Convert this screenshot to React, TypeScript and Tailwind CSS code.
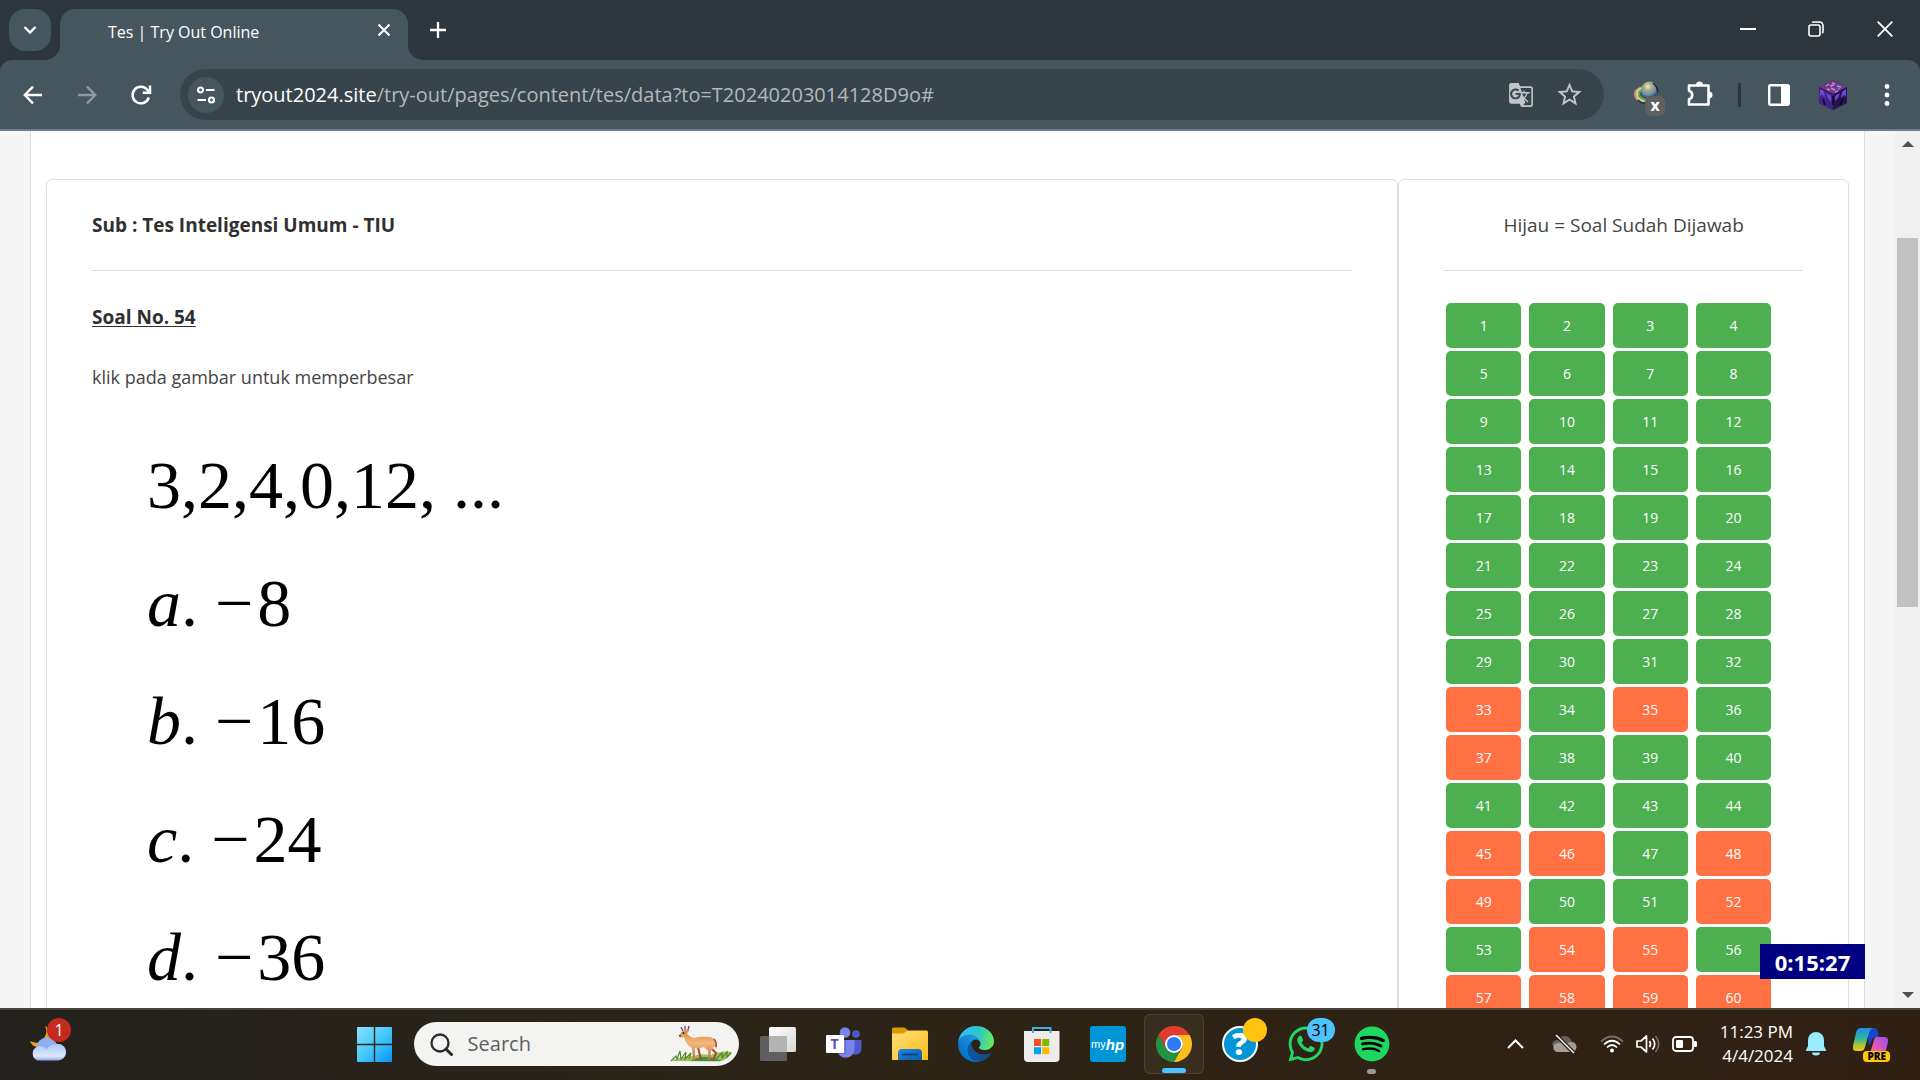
import type { ReactNode } from "react";
import { FaSpotify, FaWhatsapp } from "react-icons/fa";
import { MdGTranslate, MdOutlineStarOutline } from "react-icons/md";

const UNANSWERED = new Set([33, 35, 37, 45, 46, 48, 49, 52, 54, 55, 57, 58, 59, 60]);
const QUESTIONS = Array.from({ length: 60 }, (_, i) => i + 1);
const CHOICES = [
  { letter: "a", value: "8" },
  { letter: "b", value: "16" },
  { letter: "c", value: "24" },
  { letter: "d", value: "36" },
];

/* ---------- Browser chrome ---------- */

function TabStrip() {
  return (
    <header className="flex h-[60px] shrink-0 items-start bg-[#2c363c] pl-[9px] text-white">
      <button aria-label="Search tabs" className="mt-[9px] grid h-[42px] w-[42px] place-items-center rounded-2xl bg-[#45565f]">
        <svg width="14" height="10" viewBox="0 0 14 10" fill="none" stroke="currentColor" strokeWidth="2.4">
          <path d="M1.5 2l5.5 5.5L12.500 2" />
        </svg>
      </button>
      <div className="relative mt-[9px] ml-[9px] flex h-[51px] w-[348px] items-center rounded-t-[15px] bg-[#45565f] pr-[15px] pb-[6px] pl-12">
        <svg className="absolute bottom-0 -left-[15px]" width="15" height="15" viewBox="0 0 15 15">
          <path d="M15 0v15H0A15 15 0 0 0 15 0z" fill="#45565f" />
        </svg>
        <svg className="absolute -right-[15px] bottom-0" width="15" height="15" viewBox="0 0 15 15">
          <path d="M0 0v15h15A15 15 0 0 1 0 0z" fill="#45565f" />
        </svg>
        <span className="flex-1 text-base">Tes | Try Out Online</span>
        <button aria-label="Close tab" className="mb-1">
          <svg width="18" height="18" viewBox="0 0 18 18" fill="none" stroke="currentColor" strokeWidth="2">
            <path d="M3.500 3.500l11 11M14.500 3.500l-11 11" />
          </svg>
        </button>
      </div>
      <button aria-label="New tab" className="mt-[9px] ml-[9px] grid h-[42px] w-[42px] place-items-center">
        <svg width="18" height="18" viewBox="0 0 18 18" stroke="currentColor" strokeWidth="2.300">
          <path d="M9 1v16M1 9h16" />
        </svg>
      </button>
      <div className="ml-auto flex h-[58px] pr-px">
        <button aria-label="Minimize" className="grid w-[69px] place-items-center">
          <svg width="16" height="16" viewBox="0 0 16 16" stroke="currentColor" strokeWidth="2">
            <path d="M0 8h16" />
          </svg>
        </button>
        <button aria-label="Restore" className="grid w-[68px] place-items-center">
          <svg width="16" height="16" viewBox="0 0 16 16" fill="none" stroke="currentColor" strokeWidth="1.600">
            <rect x="1" y="4" width="11" height="11" rx="2" />
            <path d="M4 1.500C4.500 1 5 1 6 1h5.500A3.500 3.500 0 0 1 15 4.500V10c0 1 0 1.500-.8 2.300" />
          </svg>
        </button>
        <button aria-label="Close" className="grid w-[69px] place-items-center">
          <svg width="16" height="16" viewBox="0 0 16 16" stroke="currentColor" strokeWidth="1.800">
            <path d="M.7.7l14.600 14.600M15.300.7L.7 15.300" />
          </svg>
        </button>
      </div>
    </header>
  );
}

function ToolButton({ label, children }: { label: string; children: ReactNode }) {
  return (
    <button aria-label={label} className="grid h-[54px] w-[54px] shrink-0 place-items-center">
      {children}
    </button>
  );
}

function RainbowPlanet() {
  return (
    <svg width="26" height="30" viewBox="0 0 26 30">
      <defs>
        <radialGradient id="planet" cx=".4" cy=".3" r=".75">
          <stop offset="0" stopColor="#eceee0" />
          <stop offset=".3" stopColor="#a9b07c" />
          <stop offset=".65" stopColor="#6c8bb0" />
          <stop offset="1" stopColor="#1f2c3c" />
        </radialGradient>
      </defs>
      <path d="M10 7Q1 9 2 15t9 8" fill="none" stroke="#c98a8c" strokeWidth="2" />
      <path d="M10 8Q3 10 4 15t8 6" fill="none" stroke="#e6dc63" strokeWidth="2" />
      <path d="M11 9q-6 2-5 6t8 5" fill="none" stroke="#52ad61" strokeWidth="2" />
      <path d="M5 20q3 4 8 3" fill="none" stroke="#3b2b6b" strokeWidth="2" />
      <circle cx="16.500" cy="10" r="8.500" fill="url(#planet)" />
      <path d="M20 3q5 4 4.500 9" fill="none" stroke="#1d2228" strokeWidth="1.500" />
    </svg>
  );
}

function CubeAvatar() {
  return (
    <svg width="30" height="32" viewBox="0 0 30 32">
      <path d="M15 1l14 7v16l-14 7-14-7V8z" fill="#2a1258" />
      <path d="M15 1l14 7-14 7L1 8z" fill="#6d3a86" />
      <path d="M1 9l14 7v15L1 24z" fill="#3f2388" />
      <path d="M29 9l-14 7v15l14-7z" fill="#2b1252" />
      <path d="M2 10l4 2 1 7-3-4-2 3zM8 14l5 3 0 6-3-4zM28 10l-4 3-1 6 3-3 2 2zM22 14l-5 3 0 5 3-3z" fill="#6f48d0" />
      <path d="M8 7l3-2M14 4l3 1M13 9l4 2M19 7l4 1M9 10l3 1M17 13l3-1M12 7l4-1" stroke="#c98ad0" strokeWidth="1.500" />
      <path d="M15 17v9M5 20l2 6M25 19l-3 7" fill="none" stroke="#0f0620" strokeWidth="1.500" />
      <circle cx="21" cy="9.500" r="1.200" fill="#3e7bff" />
    </svg>
  );
}

function Toolbar() {
  return (
    <div className="shrink-0 bg-[#2c363c]">
      <div className="flex h-[71px] items-center rounded-t-xl border-b-2 border-[#6b7f87] bg-[#45565f] px-[6px] text-white">
        <ToolButton label="Back">
          <svg width="20" height="20" viewBox="0 0 20 20" fill="none" stroke="currentColor" strokeWidth="2.400">
            <path d="M19 10H2.500M10 1.700L1.800 10l8.200 8.300" />
          </svg>
        </ToolButton>
        <ToolButton label="Forward">
          <svg width="20" height="20" viewBox="0 0 20 20" fill="none" stroke="#8e9aa0" strokeWidth="2.400">
            <path d="M1 10h16.500M10 1.700l8.200 8.300-8.200 8.300" />
          </svg>
        </ToolButton>
        <ToolButton label="Reload">
          <svg width="22" height="22" viewBox="0 0 22 22" fill="none" stroke="currentColor" strokeWidth="2.500">
            <path d="M18.800 13.500A8.300 8.300 0 1 1 17.500 6L20 8.500" />
            <path d="M20 1.500v7.300h-7.200" />
          </svg>
        </ToolButton>
        <div className="ml-3 flex h-[51px] min-w-0 flex-1 items-center rounded-full bg-[#38444b] pr-[11px] pl-2">
          <button aria-label="View site information" className="grid h-9 w-9 shrink-0 place-items-center rounded-full bg-[#45565f]">
            <svg width="20" height="18" viewBox="0 0 20 18" fill="none" stroke="currentColor" strokeWidth="2.200">
              <circle cx="4.500" cy="4" r="2.500" />
              <path d="M10 4h8.500M1.500 14H10" />
              <circle cx="15.500" cy="14" r="2.500" />
            </svg>
          </button>
          <label htmlFor="address" className="ml-3 text-xl">
            tryout2024.site
          </label>
          <input
            id="address"
            type="text"
            defaultValue="/try-out/pages/content/tes/data?to=T20240203014128D9o#"
            className="min-w-0 flex-1 bg-transparent text-xl text-[#b3b9bc] outline-none"
          />
          <button aria-label="Translate this page" className="grid h-12 w-12 place-items-center text-[#c3c6c8]">
            <MdGTranslate size={26} />
          </button>
          <button aria-label="Bookmark this tab" className="grid h-12 w-12 place-items-center text-[#c3c6c8]">
            <MdOutlineStarOutline size={29} />
          </button>
        </div>
        <div className="ml-[15px] flex items-center">
          <button aria-label="Extension" className="relative grid h-[54px] w-[54px] place-items-center">
            <RainbowPlanet />
            <span className="absolute right-2 bottom-[6px] grid h-5 w-5 place-items-center rounded-md bg-[#5f5f5f] pb-px text-base leading-none font-bold">
              x
            </span>
          </button>
          <ToolButton label="Extensions">
            <svg width="28" height="28" viewBox="0 0 28 28">
              <path
                d="M3 4.500h19.500v19H3v-5.200q3.200-.8 3.200-4.300T3 9.700z"
                fill="none"
                stroke="currentColor"
                strokeWidth="2.600"
                strokeLinejoin="round"
              />
              <path d="M10 4a3.500 3.500 0 0 1 7 0zM23 10.500a3.500 3.500 0 0 1 0 7z" fill="currentColor" />
            </svg>
          </ToolButton>
          <span className="mx-[11px] h-6 w-[3px] bg-[#2c363c]" />
          <ToolButton label="Side panel">
            <svg width="22" height="22" viewBox="0 0 22 22">
              <rect x="1.200" y="1.200" width="19.600" height="19.600" rx="1.500" fill="none" stroke="currentColor" strokeWidth="2.400" />
              <path d="M13 1h8v20h-8z" fill="currentColor" />
            </svg>
          </ToolButton>
          <ToolButton label="Profile">
            <CubeAvatar />
          </ToolButton>
          <ToolButton label="Menu">
            <svg width="6" height="22" viewBox="0 0 6 22" fill="currentColor">
              <circle cx="3" cy="2.500" r="2.400" />
              <circle cx="3" cy="11" r="2.400" />
              <circle cx="3" cy="19.500" r="2.400" />
            </svg>
          </ToolButton>
        </div>
      </div>
    </div>
  );
}

/* ---------- Web page ---------- */

function QuestionCard() {
  return (
    <section className="w-3/4 rounded-md border border-[#dedede] px-[45px] pt-[30px] text-[#303030]">
      <h2 className="text-[19px] leading-[30px] font-bold">Sub : Tes Inteligensi Umum - TIU</h2>
      <hr className="mt-[30px] border-[#dedede]" />
      <h3 className="mt-[31px] text-[19px] leading-[30px] font-bold underline underline-offset-2">Soal No. 54</h3>
      <p className="mt-[30px] text-lg leading-[30px] text-[#444]">klik pada gambar untuk memperbesar</p>
      <div className="mt-[34px] pl-[55px] font-['Liberation_Serif',serif] text-[68px] leading-[118px] text-black">
        <p>3,2,4,0,12, ...</p>
        {CHOICES.map(({ letter, value }) => (
          <p key={letter}>
            <i>{letter}</i>. <span className="pr-1">−</span>
            {value}
          </p>
        ))}
      </div>
    </section>
  );
}

function NavigatorCard() {
  return (
    <aside className="w-1/4 rounded-md border border-[#dedede] px-[45px] pt-[30px] text-[#444]">
      <p className="text-center text-[19px] leading-[30px]">Hijau = Soal Sudah Dijawab</p>
      <hr className="mt-[30px] border-[#dedede]" />
      <div className="mt-8 mr-8 ml-[2px] grid grid-cols-4 gap-x-2 gap-y-[3px]">
        {QUESTIONS.map((n) => (
          <button
            key={n}
            className={`h-[45px] rounded-[5px] text-sm text-white ${UNANSWERED.has(n) ? "bg-[#ff7043]" : "bg-[#4caf50]"}`}
          >
            {n}
          </button>
        ))}
      </div>
    </aside>
  );
}

function ScrollBar() {
  return (
    <div className="flex w-[25px] shrink-0 flex-col items-center bg-[#f0f0f0] pt-[10px] pb-[10px]">
      <svg width="12" height="6" viewBox="0 0 12 6">
        <path d="M6 0l6 6H0z" fill="#505050" />
      </svg>
      <div className="mt-[91px] h-[43%] w-[21px] bg-[#c1c1c1]" />
      <svg className="mt-auto" width="12" height="6" viewBox="0 0 12 6">
        <path d="M0 0h12L6 6z" fill="#505050" />
      </svg>
    </div>
  );
}

function WebPage() {
  return (
    <main className="flex min-h-0 flex-1 bg-[#f5f5f5]">
      <div className="relative flex min-w-0 flex-1 overflow-hidden px-[30px]">
        <div className="flex-1 border-x border-[#dcdcdc] bg-white px-[15px] pt-12">
          <div className="flex">
            <QuestionCard />
            <NavigatorCard />
          </div>
        </div>
        <div className="absolute right-[30px] bottom-[29px] grid h-[35px] w-[105px] place-items-center bg-[#000080] text-[22px] leading-none font-bold text-white">
          0:15:27
        </div>
      </div>
      <ScrollBar />
    </main>
  );
}

/* ---------- Taskbar ---------- */

function WeatherIcon() {
  return (
    <svg width="36" height="36" viewBox="0 0 36 36">
      <defs>
        <linearGradient id="cloud" x1="0" y1="0" x2="0" y2="1">
          <stop offset="0" stopColor="#a9c6f7" />
          <stop offset=".75" stopColor="#dce9fb" />
          <stop offset="1" stopColor="#8ba9e4" />
        </linearGradient>
      </defs>
      <path d="M15 0c2 4 2 8-1 12-3 5-8 6-14 3 1 3 4 6 8 6l14-9c0-6-3-10-7-12z" fill="#f0a01e" />
      <circle cx="17" cy="22" r="10.500" fill="#8fb0ee" />
      <circle cx="28" cy="26" r="8" fill="#a9c1f0" />
      <path d="M7.500 34.500a7.500 7.500 0 0 1 0-14q5-1.500 9 3 5-7 12-5.500a8.300 8.300 0 0 1 0 16.500z" fill="url(#cloud)" />
    </svg>
  );
}

function StartIcon() {
  return (
    <svg width="35" height="35" viewBox="0 0 35 35">
      <defs>
        <linearGradient id="win" x1="0" y1="0" x2="1" y2="1">
          <stop offset="0" stopColor="#8be2fb" />
          <stop offset=".5" stopColor="#45c8fb" />
          <stop offset="1" stopColor="#0a94f8" />
        </linearGradient>
      </defs>
      <path d="M1 0h15.800v16.800H0V1a1 1 0 0 1 1-1zM18.200 0H34a1 1 0 0 1 1 1v15.800H18.200zM0 18.200h16.800V35H1a1 1 0 0 1-1-1zM18.200 18.200H35V34a1 1 0 0 1-1 1H18.200z" fill="url(#win)" />
    </svg>
  );
}

function DeerIcon() {
  return (
    <svg className="h-[38px] w-[64px] shrink-0" viewBox="0 0 64 38">
      <defs>
        <linearGradient id="coat" x1="0" y1="0" x2="0" y2="1">
          <stop offset="0" stopColor="#d9843f" />
          <stop offset=".45" stopColor="#f2b97c" />
          <stop offset="1" stopColor="#c8653a" />
        </linearGradient>
      </defs>
      <path d="M1 36q10-5 22-5 8-3 18-1 10-5 21-3-3 7-12 9.500z" fill="#a3bd5c" />
      <path d="M20 36q10-6 24-3l8 3z" fill="#3f9146" />
      <path d="M1 36l5-5 1 3 3-8 1 8 5-7-1 7 6-6-2 6M46 34l6-6 0 5 5-6 0 5 4-4" fill="none" stroke="#4f8b2a" strokeWidth="1.200" />
      <path d="M40 22l6 6-3 8M28 22l3 13" stroke="#a8482f" strokeWidth="2" fill="none" strokeLinejoin="round" />
      <path
        d="M9 11q1-3 4-5l6-2q0 3-2 4 2 4 7 5 7-2 16-1 6 1 6 7l1 5-3-3q-1 4-3 5l-1 9h-2l0-9-4-4q-5 2-9 1l0 13h-2l-1-13q-6-3-8-11-3 1-5 0z"
        fill="url(#coat)"
      />
      <path d="M13 6l-2-4M15 5l0-4M18 5l1-4" fill="none" stroke="#6c4661" strokeWidth="1.300" />
      <path d="M44 14q3 3 2 8" fill="none" stroke="#a8482f" strokeWidth="1.500" />
      <circle cx="13.500" cy="8" r=".9" fill="#222" />
      <path d="M9 10.500l2 .5" stroke="#222" strokeWidth="1.200" />
    </svg>
  );
}

function TaskViewIcon() {
  return (
    <svg width="36" height="34" viewBox="0 0 36 34">
      <defs>
        <linearGradient id="tv" x1="0" y1="0" x2="1" y2="1">
          <stop offset="0" stopColor="#fff" />
          <stop offset="1" stopColor="#d8d8d8" />
        </linearGradient>
      </defs>
      <rect x="9" y="0" width="27" height="25" rx="1.500" fill="url(#tv)" />
      <rect x="0" y="9" width="27" height="25" rx="1.500" fill="#5f5f5f" />
      <path d="M9 9h18v16H9z" fill="#b3b3b3" />
    </svg>
  );
}

function TeamsIcon() {
  return (
    <span className="relative">
      <svg width="36" height="34" viewBox="0 0 36 34">
        <circle cx="30" cy="7" r="3.800" fill="#5059c9" />
        <path d="M24 13h10.500a1 1 0 0 1 1 1v8a6 6 0 0 1-9 5z" fill="#5059c9" />
        <circle cx="19" cy="5.500" r="5.300" fill="#7b83eb" />
        <path d="M12 13h16.500v10a8.800 8.800 0 0 1-17.500 0z" fill="#7b83eb" />
        <path d="M12 26h7V14h1v13h-7.500z" fill="#4b53bc" opacity=".5" />
        <rect y="8" width="18" height="18" rx="1" fill="#fff" />
      </svg>
      <span className="absolute top-2 left-0 grid h-[18px] w-[18px] place-items-center text-sm leading-none font-bold text-[#4b53bc]">T</span>
    </span>
  );
}

function FolderIcon() {
  return (
    <svg width="36" height="34" viewBox="0 0 36 34">
      <defs>
        <linearGradient id="fold" x1="0" y1="0" x2="1" y2="1">
          <stop offset="0" stopColor="#ffe07a" />
          <stop offset="1" stopColor="#fdbc1a" />
        </linearGradient>
        <linearGradient id="foldBlue" x1="0" y1="0" x2="1" y2="1">
          <stop offset="0" stopColor="#1c86dc" />
          <stop offset="1" stopColor="#0a5fab" />
        </linearGradient>
      </defs>
      <path d="M0 2q0-1.500 1.500-1.500H12q1.500 0 3 2l2 2-4 5H0z" fill="#dd9a00" />
      <path d="M0 6.500h10q2 0 3.500-1.500t3-1.500H34.500Q36 3.500 36 5v28H0z" fill="url(#fold)" />
      <path d="M6 33v-7q0-4 4-4h16q4 0 4 4v7z" fill="url(#foldBlue)" />
      <path d="M10.500 27.500h15" stroke="#0a4584" strokeWidth="2" strokeLinecap="round" />
    </svg>
  );
}

function EdgeIcon() {
  return (
    <svg width="36" height="36" viewBox="0 0 256 256">
      <defs>
        <linearGradient id="edgeDark" x1="0" y1="0" x2="1" y2="0">
          <stop offset="0" stopColor="#0c59a4" />
          <stop offset="1" stopColor="#114a8b" />
        </linearGradient>
        <linearGradient id="edgeBlue" x1=".9" y1=".2" x2=".3" y2="1">
          <stop offset="0" stopColor="#1b9de2" />
          <stop offset=".5" stopColor="#127fd4" />
          <stop offset="1" stopColor="#0071ca" />
        </linearGradient>
        <linearGradient id="edgeGreen" x1="0" y1=".4" x2="1" y2=".6">
          <stop offset="0" stopColor="#35c1f1" />
          <stop offset=".5" stopColor="#2cc4cf" />
          <stop offset="1" stopColor="#66eb5a" />
        </linearGradient>
      </defs>
      <path fill="url(#edgeDark)" d="M231 190.500c-3.400 1.800-6.900 3.400-10.500 4.700a101.900 101.900 0 0 1-35.900 6.500c-47.300 0-88.500-32.500-88.500-74.300 0-11.300 6.300-22 16.400-27.500-42.800 1.800-53.800 46.400-53.800 72.500 0 73.900 68.100 81.400 82.800 81.400 7.900 0 19.800-2.300 27-4.600l1.300-.4a128.300 128.300 0 0 0 66.600-52.800 4 4 0 0 0-5.400-5.500z" />
      <path fill="url(#edgeBlue)" d="M105.700 241.400a79.200 79.200 0 0 1-22.700-21.300 80.700 80.700 0 0 1 29.500-120c3.200-1.500 8.500-4.100 15.600-4a32.400 32.400 0 0 1 25.700 13 32 32 0 0 1 6.300 18.700c0-.2 24.500-79.600-80-79.600-43.900 0-80 41.600-80 78.200a130.200 130.200 0 0 0 12.100 56 128 128 0 0 0 156.400 67 75.500 75.500 0 0 1-62.800-8z" />
      <path fill="url(#edgeGreen)" d="M152.300 148.900c-.9 1-3.400 2.500-3.400 5.600 0 2.600 1.700 5.100 4.700 7.200 14.400 10 41.500 8.700 41.600 8.700a59.600 59.600 0 0 0 30.300-8.400A61.400 61.400 0 0 0 256 109.300c.3-22.400-8-37.300-11.300-43.900C223.500 23.900 177.700 0 128 0A128 128 0 0 0 0 126.200c.5-36.500 36.800-66 80-66 3.500 0 23.500.3 42 10.100a72.600 72.600 0 0 1 30.900 29.300c6.100 10.600 7.200 24.100 7.200 29.500s-2.700 13.300-7.800 19.900z" />
    </svg>
  );
}

function StoreIcon() {
  return (
    <svg width="36" height="36" viewBox="0 0 36 36">
      <path d="M0 5h35.500v27a4 4 0 0 1-4 4H4a4 4 0 0 1-4-4z" fill="#ececec" />
      <path d="M9 7V2h17.500v5" fill="none" stroke="#2fb2ee" strokeWidth="2" />
      <path d="M10 13h7v7h-7z" fill="#f25022" />
      <path d="M18.200 13h7v7h-7z" fill="#7fba00" />
      <path d="M10 21.200h7v7h-7z" fill="#00a4ef" />
      <path d="M18.200 21.200h7v7h-7z" fill="#ffb900" />
    </svg>
  );
}

function ChromeIcon() {
  return (
    <svg width="36" height="36" viewBox="0 0 48 48">
      <path d="M24 12h20.780A24 24 0 0 0 3.210 12l10.400 18A12 12 0 0 1 24 12z" fill="#e33b2e" />
      <path d="M13.610 30L3.220 12A24 24 0 0 0 24 48l10.400-18a12 12 0 0 1-20.790 0z" fill="#229342" />
      <path d="M34.390 30L24 48a24 24 0 0 0 20.780-36H24a12 12 0 0 1 10.390 18z" fill="#fbc116" />
      <circle cx="24" cy="24" r="12" fill="#fff" />
      <circle cx="24" cy="24" r="9.500" fill="#2f7bf2" />
    </svg>
  );
}

function CopilotIcon() {
  return (
    <svg width="36" height="32" viewBox="0 0 36 32">
      <defs>
        <linearGradient id="copA" x1="0" y1="0" x2="0" y2="1">
          <stop offset="0" stopColor="#1b8ff0" />
          <stop offset=".45" stopColor="#2fb59a" />
          <stop offset=".75" stopColor="#a8c93a" />
          <stop offset="1" stopColor="#f6c21c" />
        </linearGradient>
        <linearGradient id="copB" x1="1" y1="0" x2="0" y2="1">
          <stop offset="0" stopColor="#9a4df0" />
          <stop offset=".5" stopColor="#e05ab0" />
          <stop offset="1" stopColor="#fb8a55" />
        </linearGradient>
      </defs>
      <path d="M14 0h7q3 0 4 4l1 5h-3q-3 0-4 3l-3 6z" fill="#1846c8" />
      <path d="M8 0h12q-3 1-4 5l-4 14q-1 4-4 4H3q-4 0-3-5L3 5q1-5 5-5z" fill="url(#copA)" />
      <path d="M23 9h8q5 0 4 5l-3 12q-1 5-5 5H13l2-4q2-1 3-5l3-10q1-3 2-3z" fill="url(#copB)" />
    </svg>
  );
}

function TaskButton({ label, children, active = false }: { label: string; children: ReactNode; active?: boolean }) {
  return (
    <button
      aria-label={label}
      className={`relative grid h-[60px] w-[60px] shrink-0 place-items-center rounded-md ${active ? "border border-white/10 bg-white/5" : ""}`}
    >
      {children}
    </button>
  );
}

function Taskbar() {
  return (
    <footer className="relative flex h-[72px] shrink-0 items-center border-t-2 border-[#48443a] bg-linear-to-r from-[#24221e] via-[#2d2415] to-[#312114] pb-[2px] text-white">
      <div className="w-[18%] shrink-0 pl-[18px]">
        <TaskButton label="Weather">
          <WeatherIcon />
          <span className="absolute top-[4px] left-[29px] grid h-6 w-6 place-items-center rounded-full bg-[#c42b1c] text-base leading-none">1</span>
        </TaskButton>
      </div>
      <div className="-ml-px flex items-center gap-[6px]">
        <TaskButton label="Start">
          <StartIcon />
        </TaskButton>
        <div className="mx-[3px] flex h-11 w-[325px] items-center overflow-hidden rounded-full bg-[#f3f3f1] pr-[5px] pl-4">
          <svg className="shrink-0" width="23" height="23" viewBox="0 0 23 23" fill="none" stroke="#2b2b2b" strokeWidth="2.300">
            <circle cx="10" cy="10" r="8.500" />
            <path d="M16 16l5.500 5.500" strokeWidth="3" strokeLinecap="round" />
          </svg>
          <input
            type="search"
            aria-label="Search"
            placeholder="Search"
            className="ml-[15px] min-w-0 flex-1 bg-transparent text-xl text-[#333] outline-none placeholder:text-[#5e5e5e]"
          />
          <DeerIcon />
        </div>
        <TaskButton label="Task view">
          <TaskViewIcon />
        </TaskButton>
        <TaskButton label="Microsoft Teams">
          <TeamsIcon />
        </TaskButton>
        <TaskButton label="File Explorer">
          <FolderIcon />
        </TaskButton>
        <TaskButton label="Microsoft Edge">
          <EdgeIcon />
        </TaskButton>
        <TaskButton label="Microsoft Store">
          <StoreIcon />
        </TaskButton>
        <TaskButton label="myHP">
          <span className="flex h-9 w-9 items-center justify-center rounded-[3px] bg-[#0096d6] font-['Liberation_Sans',sans-serif] text-[11px] leading-none">
            my<b className="text-[15px] leading-none italic">hp</b>
          </span>
        </TaskButton>
        <TaskButton label="Google Chrome" active>
          <ChromeIcon />
          <span className="absolute bottom-0 left-[17px] h-[5px] w-6 rounded-full bg-[#4cc2ff]" />
        </TaskButton>
        <TaskButton label="HP Support">
          <span className="grid h-9 w-9 place-items-center rounded-full border-2 border-white bg-[#0096d6] text-[30px] leading-none font-extrabold">?</span>
          <span className="absolute top-[4px] right-[3px] h-6 w-6 rounded-full bg-[#ffc20e]" />
        </TaskButton>
        <TaskButton label="WhatsApp">
          <FaWhatsapp size={40} color="#25d366" />
          <span className="absolute top-[4px] right-[1px] grid h-6 w-7 place-items-center rounded-full bg-[#4cc2ff] text-base leading-none text-black">
            31
          </span>
        </TaskButton>
        <TaskButton label="Spotify">
          <span className="grid h-9 w-9 place-items-center rounded-full bg-[radial-gradient(circle,#000_60%,transparent_62%)]">
            <FaSpotify size={36} color="#1ed760" />
          </span>
          <span className="absolute bottom-0 left-[25px] h-[5px] w-[9px] rounded-full bg-[#9d9690]" />
        </TaskButton>
      </div>

      <div className="ml-auto flex items-center pr-[31px]">
        <button aria-label="Show hidden icons" className="grid h-12 w-12 place-items-center">
          <svg width="17" height="10" viewBox="0 0 17 10" fill="none" stroke="currentColor" strokeWidth="2">
            <path d="M1 9l7.500-7.500L16 9" />
          </svg>
        </button>
        <button aria-label="OneDrive" className="grid h-12 w-12 place-items-center">
          <svg width="26" height="20" viewBox="0 0 26 20">
            <path d="M1 11q1-5 6-5 2-4 7-4 5 0 7 6L13 17z" fill="#68625c" />
            <path d="M6 18a4.500 4.500 0 0 1-1-8.500q8-3 11 0 2-2 5-1.500a5 5 0 0 1-1 10z" fill="#a39d97" />
            <path d="M5 1l18 18" stroke="#312114" strokeWidth="4" />
            <path d="M5 1l18 18" stroke="#fff" strokeWidth="1.500" />
          </svg>
        </button>
        <button aria-label="Network, sound and battery" className="flex h-12 items-center gap-3 pl-3">
          <svg width="24" height="18" viewBox="0 0 24 18" fill="none" stroke="currentColor" strokeWidth="1.700">
            <path d="M1 6.500q11-10 22 0" opacity=".35" />
            <path d="M4 9.500q8-7.500 16 0M7 12.500q5-5 10 0" />
            <circle cx="12" cy="15.500" r="2" fill="currentColor" stroke="none" />
          </svg>
          <svg width="24" height="20" viewBox="0 0 24 20" fill="none" stroke="currentColor" strokeWidth="1.700">
            <path d="M1 7h4l5.500-5v16L5 13H1z" strokeLinejoin="round" />
            <path d="M13.500 7q2 3 0 6M16.500 4.500q4.500 5.500 0 11" />
            <path d="M19.500 2q6.500 8 0 16" opacity=".35" />
          </svg>
          <svg width="25" height="16" viewBox="0 0 25 16">
            <rect x="1" y="1" width="20" height="14" rx="3" fill="none" stroke="#fff" strokeWidth="1.800" />
            <rect x="4" y="4" width="7" height="8" rx="1" fill="#fff" />
            <path d="M22 5h1.500q1.500 0 1.500 1.500v3q0 1.500-1.500 1.500H22z" fill="#fff" />
          </svg>
        </button>
        <button className="ml-[23px] text-right text-[17px] leading-6">
          <time className="block">11:23 PM</time>
          <time className="block">4/4/2024</time>
        </button>
        <button aria-label="Notifications" className="ml-[13px]">
          <svg width="20" height="24" viewBox="0 0 20 24" fill="#99ebff">
            <path d="M10 0a8 8 0 0 1 8 8v6l2 4v1H0v-1l2-4V8a8 8 0 0 1 8-8zM6 20.500h8a4 3 0 0 1-8 0z" />
          </svg>
        </button>
        <button aria-label="Copilot" className="relative ml-[27px]">
          <CopilotIcon />
          <span className="absolute -right-px -bottom-[2px] rounded-sm bg-[#ffc80a] px-1 text-[10px] leading-[11px] font-extrabold text-black">PRE</span>
        </button>
      </div>
    </footer>
  );
}

export default function App() {
  return (
    <div className="flex h-screen flex-col overflow-hidden font-['Open_Sans','Noto_Sans',sans-serif]">
      <TabStrip />
      <Toolbar />
      <WebPage />
      <Taskbar />
    </div>
  );
}
